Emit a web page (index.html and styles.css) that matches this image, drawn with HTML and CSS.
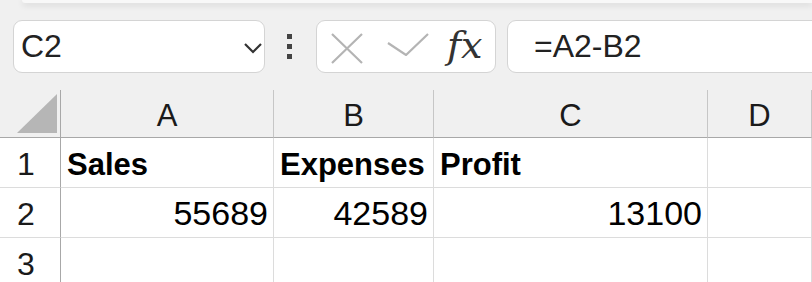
FILE: index.html
```html
<!DOCTYPE html>
<html lang="en">
<head>
    <meta charset="UTF-8">
    <title>Sheet</title>
    <link rel="stylesheet" href="styles.css">
</head>
<body>
    <div class="ribbon"></div>

    <!-- formula bar -->
    <div class="toolbar">
        <div class="name-box">
            <span>C2</span>
            <svg class="chevron" width="20" height="14" viewBox="0 0 20 14"><path d="M2 3 L10 11 L18 3" fill="none" stroke="#333" stroke-width="2.2"/></svg>
        </div>
        <div class="dots"><i></i><i></i><i></i></div>
        <div class="buttons">
            <svg width="32" height="31" viewBox="0 0 32 31"><path d="M1 1 L31 30 M31 1 L1 30" stroke="#b4b4b4" stroke-width="2.2" fill="none"/></svg>
            <svg width="42" height="23" viewBox="0 0 42 23"><path d="M1 10 L19 22 L41 1" stroke="#b4b4b4" stroke-width="2.2" fill="none"/></svg>
            <span class="fx">fx</span>
        </div>
        <div class="formula">=A2-B2</div>
    </div>

    <!-- grid -->
    <div class="sheet">
        <div class="corner"><div class="tri"></div></div>
        <div class="col-head">A</div>
        <div class="col-head">B</div>
        <div class="col-head">C</div>
        <div class="col-head">D</div>

        <div class="row-head">1</div>
        <div class="cell bold">Sales</div>
        <div class="cell bold">Expenses</div>
        <div class="cell bold">Profit</div>
        <div class="cell"></div>

        <div class="row-head">2</div>
        <div class="cell num">55689</div>
        <div class="cell num">42589</div>
        <div class="cell num">13100</div>
        <div class="cell"></div>

        <div class="row-head">3</div>
        <div class="cell"></div>
        <div class="cell"></div>
        <div class="cell"></div>
        <div class="cell"></div>
    </div>
</body>
</html>
```

FILE: styles.css
```css
body {
    margin: 0;
    background: #f0f0f0;
    font-family: "Liberation Sans", Arial, sans-serif;
    color: #111;
    overflow: hidden;
}

.ribbon {
    height: 3px;
    margin-left: 22px;
    background: #f8f8f8;
    border-bottom-left-radius: 8px;
    box-shadow: 0 2px 6px rgba(0,0,0,0.14);
}

.toolbar {
    display: flex;
    align-items: center;
    height: 53px;
    margin: 17px -20px 17px 13px;
}

.name-box, .buttons, .formula {
    background: #fff;
    border: 1px solid #d4d4d4;
    border-radius: 9px;
    box-sizing: border-box;
    height: 53px;
}

.name-box {
    width: 252px;
    display: flex;
    align-items: center;
    justify-content: space-between;
    padding: 0 1px 1px 7px;
    font-size: 32px;
    color: #222;
}

.chevron {
    margin-top: 4px;
}

.dots {
    display: flex;
    flex-direction: column;
    gap: 5px;
    margin: 0 24px 0 22px;
}

.dots i {
    width: 5px;
    height: 5px;
    background: #444;
}

.buttons {
    width: 180px;
    display: flex;
    align-items: center;
    padding: 0 0 0 14px;
}

.buttons svg:first-child {
    margin: 4px 0 0 0;
}

.buttons svg:nth-child(2) {
    margin: 0 0 4px 24px;
}

.fx {
    font-family: "DejaVu Serif", "Liberation Serif", serif;
    font-style: italic;
    font-size: 38px;
    color: #333;
    margin: 0 0 4px 18px;
}

.formula {
    flex: 1;
    margin-left: 11px;
    display: flex;
    align-items: center;
    padding: 0 0 1px 26px;
    font-size: 32px;
    color: #222;
}

.sheet {
    display: grid;
    grid-template-columns: 61px 213px 160px 274px 1fr;
    grid-template-rows: 48px 50px 50px 50px;
    background: #fff;
}

.corner, .col-head {
    background: #f0f0f0;
    border-bottom: 1px solid #a8a8a8;
    box-sizing: border-box;
}

.corner {
    border-right: 1px solid #a8a8a8;
    position: relative;
}

.tri {
    position: absolute;
    right: 3px;
    bottom: 4px;
    width: 0;
    height: 0;
    border-left: 40px solid transparent;
    border-bottom: 39px solid #b6b6b6;
}

.col-head {
    border-right: 1px solid #c6c6c6;
    display: flex;
    align-items: flex-end;
    justify-content: center;
    font-size: 31px;
    line-height: 31px;
    padding-bottom: 6px;
    color: #1a1a1a;
}

.row-head {
    border-right: 1px solid #a8a8a8;
    border-bottom: 1px solid #dcdcdc;
    display: flex;
    align-items: flex-end;
    justify-content: center;
    padding: 0 8px 7px 0;
    font-size: 32px;
    line-height: 32px;
    color: #1a1a1a;
}

.cell {
    border-right: 1px solid #dcdcdc;
    border-bottom: 1px solid #dcdcdc;
    display: flex;
    align-items: flex-end;
    padding: 0 5px 7px 6px;
    font-size: 31px;
    line-height: 31px;
    color: #000;
    white-space: nowrap;
}

.bold {
    font-weight: bold;
}

.num {
    justify-content: flex-end;
    font-size: 34px;
    line-height: 34px;
}
```
